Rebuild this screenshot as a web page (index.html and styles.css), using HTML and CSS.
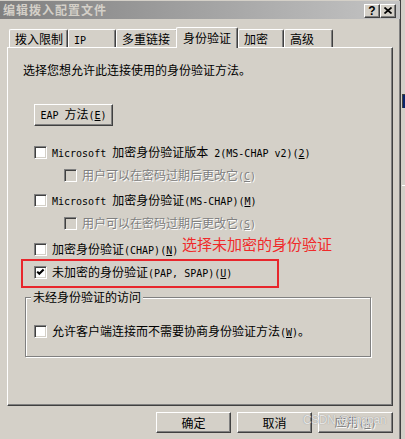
FILE: index.html
```html
<!DOCTYPE html>
<html lang="zh-CN">
<head>
<meta charset="utf-8">
<title>编辑拨入配置文件</title>
<link rel="stylesheet" href="styles.css">
</head>
<body>
<div class="desk">
  <div class="window">
    <div class="titlebar">
      <span class="title">编辑拨入配置文件</span>
      <div class="tbtns">
        <span class="tbtn help">?</span>
        <span class="tbtn close"><svg width="8" height="7" viewBox="0 0 8 7"><path d="M0.5 0.5 L7.5 6.5 M7.5 0.5 L0.5 6.5" stroke="#000" stroke-width="1.7" fill="none"/></svg></span>
      </div>
    </div>
    <div class="main">
      <div class="tabs">
        <div class="tab t1">拨入限制</div>
        <div class="tab t2"><span class="m">IP</span></div>
        <div class="tab t3">多重链接</div>
        <div class="tab t4 active">身份验证</div>
        <div class="tab t5">加密</div>
        <div class="tab t6">高级</div>
      </div>
      <div class="panel">
        <div class="intro">选择您想允许此连接使用的身份验证方法。</div>
        <button class="btn eap"><span class="btxt"><span class="m">EAP </span>方法<span class="m">(<u>E</u>)</span></span></button>
        <div class="row r1"><span class="cb"></span><span class="lbl"><span class="m">Microsoft </span>加密身份验证版本<span class="m"> 2(MS-CHAP v2)(<u>2</u>)</span></span></div>
        <div class="row sub"><span class="cb dis"></span><span class="lbl dim">用户可以在密码过期后更改它<span class="m">(<u>C</u>)</span></span></div>
        <div class="row r2"><span class="cb"></span><span class="lbl"><span class="m">Microsoft </span>加密身份验证<span class="m">(MS-CHAP)(<u>M</u>)</span></span></div>
        <div class="row sub"><span class="cb dis"></span><span class="lbl dim">用户可以在密码过期后更改它<span class="m">(<u>S</u>)</span></span></div>
        <div class="row r3"><span class="cb"></span><span class="lbl">加密身份验证<span class="m">(CHAP)(<u>N</u>)</span></span></div>
        <div class="row"><span class="cb"><svg width="11" height="11" viewBox="0 0 11 11"><path d="M2.2 4.6 L4.3 6.8 L8.6 2.4" stroke="#000" stroke-width="2.1" fill="none"/></svg></span><span class="lbl">未加密的身份验证<span class="m">(PAP, SPAP)(<u>U</u>)</span></span></div>
        <div class="group">
          <span class="group-label">未经身份验证的访问</span>
          <div class="row"><span class="cb"></span><span class="lbl">允许客户端连接而不需要协商身份验证方法<span class="m">(<u>W</u>)</span>。</span></div>
        </div>
      </div>
      <div class="buttons">
        <button class="btn"><span class="btxt">确定</span></button>
        <button class="btn"><span class="btxt">取消</span></button>
        <button class="btn disabled"><span class="btxt">应用<span class="m">(<u>A</u>)</span></span></button>
      </div>
    </div>
    <div class="note">选择未加密的身份验证</div>
    <div class="mark"></div>
    <div class="watermark">CSDN @lingpan</div>
  </div>
  <div class="behind-blue"></div>
  <div class="behind-white"></div>
</div>
</body>
</html>
```

FILE: styles.css
```css
* { box-sizing: border-box; }
html, body { margin: 0; padding: 0; }
body {
  width: 405px;
  height: 439px;
  overflow: hidden;
  background: #d4d0c8;
  font-family: "Noto Sans CJK SC", "Noto Sans", sans-serif;
  font-size: 12px;
  color: #000;
}
.desk { position: relative; width: 405px; height: 439px; background: #d4d0c8; }
.window {
  position: relative;
  width: 401px;
  height: 439px;
  padding-top: 1px;
  border-right: 1px solid #404040;
  box-shadow: inset -1px 0 #808080;
  background: #d4d0c8;
}
.m { font-family: "DejaVu Sans Mono", "Liberation Mono", monospace; font-size: 10px; }
u { text-decoration: underline; text-underline-offset: 1px; }

/* title bar */
.titlebar {
  height: 18px;
  display: flex;
  justify-content: space-between;
  align-items: flex-start;
  background: linear-gradient(to right, #808080, #c4c4c4);
}
.title {
  padding-left: 3px;
  line-height: 18px;
  font-weight: bold;
  letter-spacing: 1px;
  color: #d4d0c8;
}
.tbtns { display: flex; margin-top: 3px; margin-right: 4px; }
.tbtn {
  width: 16px;
  height: 14px;
  display: flex;
  align-items: center;
  justify-content: center;
  background: #d4d0c8;
  border: 1px solid;
  border-color: #fff #404040 #404040 #fff;
  box-shadow: inset -1px -1px #808080;
}
.help {
  font-family: "Liberation Sans", sans-serif;
  font-weight: bold;
  font-size: 12px;
  line-height: 12px;
  padding-bottom: 1px;
}
.close svg { display: block; margin-top: -1px; }

/* tabs */
.main { padding-left: 7px; }
.tabs {
  display: flex;
  align-items: flex-end;
  height: 20px;
  margin-top: 8px;
  padding-left: 2px;
}
.tab {
  height: 18px;
  padding: 1px 0 0 5px;
  line-height: 16px;
  white-space: nowrap;
  background: #d4d0c8;
  border-top: 1px solid #fff;
  border-left: 1px solid #fff;
  border-right: 1px solid #404040;
  border-radius: 2px 2px 0 0;
  box-shadow: inset -1px 0 #808080;
}
.t1 { width: 59px; }
.t2 { width: 48px; }
.t3 { width: 62px; }
.t4 { width: 62px; }
.t5 { width: 46px; }
.t6 { width: 49px; }
.tab.active {
  position: relative;
  z-index: 2;
  height: 21px;
  margin-left: -2px;
  margin-bottom: -1px;
  padding: 2px 0 0 6px;
}

/* panel */
.panel {
  position: relative;
  width: 386px;
  height: 359px;
  padding: 14px 0 0 15px;
  border-top: 1px solid #fff;
  border-left: 1px solid #fff;
  border-right: 1px solid #404040;
  border-bottom: 1px solid #404040;
  box-shadow: inset -1px -1px #808080;
}
.intro { line-height: 16px; }

.btn {
  font-family: inherit;
  font-size: 12px;
  color: #000;
  margin: 0;
  padding: 0;
  display: flex;
  align-items: center;
  justify-content: center;
  line-height: 14px;
  white-space: nowrap;
  background: #d4d0c8;
  border: 1px solid;
  border-color: #fff #404040 #404040 #fff;
  box-shadow: inset -1px -1px #808080;
}
.btxt { white-space: pre; }
.btn.disabled { color: #808080; text-shadow: 1px 1px 0 #fff; }
.eap { width: 79px; height: 22px; margin: 26px 0 0 11px; }

/* checkbox rows */
.row {
  display: flex;
  align-items: center;
  height: 13px;
  line-height: 13px;
  margin: 10px 0 0 11px;
  white-space: nowrap;
}
.row.r1 { margin-top: 20px; }
.row.r2 { margin-top: 12px; }
.row.r3 { margin-top: 13px; }
.row.sub { margin-left: 41px; }
.cb {
  flex: none;
  width: 13px;
  height: 13px;
  margin-right: 5px;
  background: #fff;
  border: 1px solid;
  border-color: #808080 #fff #fff #808080;
  box-shadow: inset 1px 1px #404040, inset -1px -1px #d4d0c8;
}
.cb svg { display: block; }
.cb.dis { background: #d4d0c8; }
.lbl.dim { color: #808080; text-shadow: 1px 1px 0 #fff; }

/* group box */
.group {
  position: relative;
  width: 346px;
  height: 60px;
  margin: 18px 0 0 2px;
  padding: 27px 0 0 8px;
  border: 1px solid #808080;
  box-shadow: inset 1px 1px #fff, 1px 1px #fff;
}
.group .row { margin: 0; }
.group-label {
  position: absolute;
  top: -8px;
  left: 5px;
  padding: 0 2px;
  line-height: 14px;
  background: #d4d0c8;
}

/* bottom buttons */
.buttons {
  display: flex;
  justify-content: flex-end;
  gap: 6px;
  width: 386px;
  margin-top: 6px;
}
.buttons .btn { width: 75px; height: 21px; }

/* annotations */
.note {
  position: absolute;
  left: 182px;
  top: 236px;
  font-size: 15px;
  line-height: 15px;
  color: #f02a2a;
  white-space: nowrap;
}
.mark {
  position: absolute;
  left: 21px;
  top: 259px;
  width: 258px;
  height: 29px;
  border: 2px solid #e8262c;
}
.watermark {
  position: absolute;
  left: 303px;
  top: 413px;
  font-family: "Liberation Sans", sans-serif;
  font-size: 12px;
  line-height: 14px;
  letter-spacing: -0.4px;
  color: rgba(244, 244, 244, 0.85);
  text-shadow: 0 0 1px rgba(80, 80, 80, 0.6);
  white-space: nowrap;
}

/* window behind */
.behind-blue {
  position: absolute;
  left: 402px;
  top: 94px;
  width: 3px;
  height: 14px;
  background: #0a246a;
  border-top: 1px solid #404040;
  border-left: 1px solid #404040;
}
.behind-white {
  position: absolute;
  left: 402px;
  top: 185px;
  width: 3px;
  height: 1px;
  background: #fff;
}
```
